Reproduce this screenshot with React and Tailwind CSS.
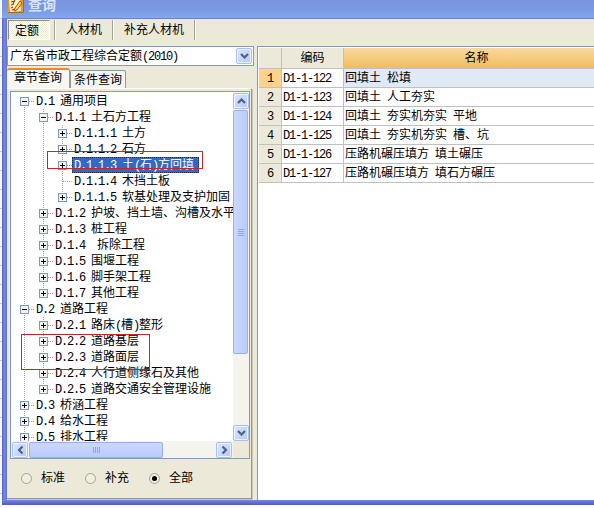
import React from 'react';

const tree = [
  { level: 0, label: 'D.1 通用项目', state: 'open', first: true },
  { level: 1, label: 'D.1.1 土石方工程', state: 'open' },
  { level: 2, label: 'D.1.1.1 土方', state: 'closed' },
  { level: 2, label: 'D.1.1.2 石方', state: 'closed' },
  { level: 2, label: 'D.1.1.3 土(石)方回填', state: 'closed', selected: true },
  { level: 2, label: 'D.1.1.4 木挡土板', state: 'leaf' },
  { level: 2, label: 'D.1.1.5 软基处理及支护加固', state: 'closed', last: true },
  { level: 1, label: 'D.1.2 护坡、挡土墙、沟槽及水平', state: 'closed' },
  { level: 1, label: 'D.1.3 桩工程', state: 'closed' },
  { level: 1, label: 'D.1.4  拆除工程', state: 'closed' },
  { level: 1, label: 'D.1.5 围堰工程', state: 'closed' },
  { level: 1, label: 'D.1.6 脚手架工程', state: 'closed' },
  { level: 1, label: 'D.1.7 其他工程', state: 'closed', last: true },
  { level: 0, label: 'D.2 道路工程', state: 'open' },
  { level: 1, label: 'D.2.1 路床(槽)整形', state: 'closed' },
  { level: 1, label: 'D.2.2 道路基层', state: 'closed' },
  { level: 1, label: 'D.2.3 道路面层', state: 'closed' },
  { level: 1, label: 'D.2.4 人行道侧缘石及其他', state: 'closed' },
  { level: 1, label: 'D.2.5 道路交通安全管理设施', state: 'closed', last: true },
  { level: 0, label: 'D.3 桥涵工程', state: 'closed' },
  { level: 0, label: 'D.4 给水工程', state: 'closed' },
  { level: 0, label: 'D.5 排水工程', state: 'closed' },
];

const rows = [
  ['D1-1-122', '回填土 松填'],
  ['D1-1-123', '回填土 人工夯实'],
  ['D1-1-124', '回填土 夯实机夯实 平地'],
  ['D1-1-125', '回填土 夯实机夯实 槽、坑'],
  ['D1-1-126', '压路机碾压填方 填土碾压'],
  ['D1-1-127', '压路机碾压填方 填石方碾压'],
];

// Latin runs are set half as wide as the Chinese characters
const Text = ({ children }) => (
  <span className="whitespace-pre">
    {children.split(/([ -~]+)/).filter(Boolean).map((part, i) =>
      /^[ -~]/.test(part) ? (
        <span key={i} className="font-['Liberation_Mono',monospace] tracking-[-1.2px]">{part}</span>
      ) : (
        <span key={i}>{part}</span>
      )
    )}
  </span>
);

const Chevron = ({ className = '' }) => (
  <svg viewBox="0 0 9 6" className={`h-[6px] w-[9px] shrink-0 ${className}`}>
    <path d="M1 1 L4.5 4.5 L8 1" fill="none" stroke="#4d6185" strokeWidth="2.2" />
  </svg>
);

const ScrollButton = ({ turn }) => (
  <div className="flex h-4 w-4 shrink-0 items-center justify-center rounded-[2px] border border-[#a9bff0] bg-gradient-to-br from-[#dce6ff] to-[#b5c8f8] shadow-[inset_0_0_0_1px_#edf2ff]">
    <Chevron className={turn} />
  </div>
);

const Toggle = ({ state }) => (
  <svg viewBox="0 0 9 9" className="h-[9px] w-[9px] shrink-0" shapeRendering="crispEdges">
    <rect x="0.5" y="0.5" width="8" height="8" fill="#f4f2ec" stroke="#7f98b4" />
    <path d="M2 4.5 H7" stroke="#000" />
    {state === 'closed' && <path d="M4.5 2 V7" stroke="#000" />}
  </svg>
);

// One 19px wide column with a dotted connector line
const Guide = () => (
  <svg viewBox="0 0 19 16" className="h-4 w-[19px] shrink-0" shapeRendering="crispEdges">
    <path d="M9.5 0 V16" stroke="#a0a0a0" strokeDasharray="1 1" />
  </svg>
);

const TreeRow = ({ node }) => (
  <div className="flex h-4 shrink-0 items-center pl-1">
    {node.level > 0 && <Guide />}
    {node.level > 1 && <Guide />}
    <div className="relative flex h-4 w-[19px] shrink-0 items-center pl-[5px]">
      <svg viewBox="0 0 19 16" className="absolute left-0 top-0 h-4 w-[19px]" shapeRendering="crispEdges">
        <path
          d={node.last ? 'M9.5 0 V8' : node.first ? 'M9.5 8 V16' : 'M9.5 0 V16'}
          stroke="#a0a0a0"
          strokeDasharray="1 1"
        />
        <path d="M10 8.5 H19" stroke="#a0a0a0" strokeDasharray="1 1" />
      </svg>
      {node.state !== 'leaf' && (
        <div className="relative pt-px">
          <Toggle state={node.state} />
        </div>
      )}
    </div>
    <div
      className={`flex h-4 items-center pl-[2px] ${
        node.selected ? 'bg-[#316ac5] pr-[5px] text-white outline-1 -outline-offset-1 outline-dotted outline-[#1b2b55]' : ''
      }`}
    >
      <Text>{node.label}</Text>
    </div>
  </div>
);

const Radio = ({ label, checked }) => (
  <div className="flex w-16 items-center">
    <div className="flex h-[11px] w-[11px] items-center justify-center rounded-full border border-[#a5a292] bg-[#f1efe4]">
      {checked && <div className="h-[5px] w-[5px] rounded-full bg-black" />}
    </div>
    <span className="ml-[9px]">{label}</span>
  </div>
);

const TitleBar = () => (
  <div className="flex h-[19px] shrink-0 items-start border-b border-[#6a86c8] bg-gradient-to-b from-[#7b94df] via-[#7a98e2] to-[#82a8ec] pl-[6px]">
    <svg viewBox="0 0 16 14" className="h-[14px] w-4">
      <path d="M0 0 H16 V13 H0 Z" fill="#e8971f" />
      <path d="M1 0 H12 L13 11 L2 12 Z" fill="#fff3cc" />
      <path d="M3 2 L7 1 M3 5 L6 4 M3 8 L5 7 M7 0 L5 4 M4 10 L7 9" stroke="#8a4510" strokeWidth="1.2" />
      <path d="M12 1 L7 8 L6 11 L9 10 L14 3 Z" fill="#ffd45a" stroke="#a65a0c" />
      <path d="M0 12.5 H15.5 V0" fill="none" stroke="#b8630e" />
    </svg>
    <span className="ml-1 -mt-[2px] text-[14px] font-bold leading-[14px] text-[#d9e4fb]">查询</span>
  </div>
);

const TopTabs = () => (
  <div className="flex h-[21px] shrink-0 items-start pl-px pt-px leading-5">
    <div className="h-5 w-[42px] border border-white border-l-[#8f8d80] border-t-[#8f8d80] bg-[repeating-conic-gradient(#ffffff_0_25%,#ece9d8_0_50%)] bg-[length:2px_2px] pl-[6px]">
      定额
    </div>
    <div className="ml-1 h-5 w-[58px] border-l border-[#a5a394] pl-[11px] shadow-[inset_1px_0_0_#fff]">人材机</div>
    <div className="h-5 w-[83px] border-l border-r border-[#a5a394] pl-[11px] shadow-[inset_1px_0_0_#fff,1px_0_0_#fff]">补充人材机</div>
  </div>
);

const TreePanel = () => (
  <div className="relative flex h-[368px] w-[240px] border border-[#7f9db9] bg-white">
    <div className="flex w-[222px] flex-col">
      <div className="h-[349px] overflow-hidden">
        <div className="flex flex-col pt-px">
          {tree.map((node) => (
            <TreeRow key={node.label} node={node} />
          ))}
        </div>
      </div>
      <div className="flex h-[17px] items-center bg-[#f4f3ee] px-px">
        <ScrollButton turn="rotate-90" />
        <div className="ml-px flex h-4 w-[134px] items-center justify-center gap-px rounded-[2px] border border-[#98b2e8] bg-gradient-to-b from-[#cbd9ff] to-[#b9cbf9]">
          {[0, 1, 2, 3].map((n) => (
            <i key={n} className="h-[6px] w-px bg-[#8fa9e0]" />
          ))}
        </div>
        <div className="ml-auto">
          <ScrollButton turn="-rotate-90" />
        </div>
      </div>
    </div>
    <div className="flex w-4 flex-col bg-[#f4f3ee]">
      <div className="flex h-[349px] flex-col pt-px">
        <ScrollButton turn="rotate-180" />
        <div className="mt-px flex h-[244px] w-[15px] flex-col items-center justify-center gap-px rounded-[2px] border border-[#98b2e8] bg-gradient-to-r from-[#cbd9ff] to-[#b9cbf9]">
          {[0, 1, 2, 3].map((n) => (
            <i key={n} className="h-px w-[6px] bg-[#8fa9e0]" />
          ))}
        </div>
        <div className="mt-auto">
          <ScrollButton turn="" />
        </div>
      </div>
      <div className="h-[17px] bg-[#ece9d8]" />
    </div>
    {/* red review marks drawn over the tree */}
    <div className="absolute left-[36px] top-[59px] h-[18px] w-[156px] border border-[#c4242c]" />
    <div className="absolute left-[10px] top-[242px] h-[36px] w-[129px] border border-[#c4242c]" />
  </div>
);

const LeftPane = () => (
  <div className="flex w-[250px] shrink-0 flex-col">
    <div className="mt-[6px] flex h-5 w-[247px] items-center justify-between border border-[#7f9db9] bg-white pl-[2px] pr-px">
      <Text>广东省市政工程综合定额(2010)</Text>
      <ScrollButton turn="" />
    </div>
    <div className="mt-[2px] flex h-5 items-end">
      <div className="h-5 w-[63px] rounded-t-[3px] border-r border-t-2 border-[#919b9c] border-t-[#e68b2c] bg-[#f7f6f0] pl-[7px] leading-[17px]">
        章节查询
      </div>
      <div className="h-[18px] w-[56px] rounded-t-[2px] border border-b-0 border-[#919b9c] bg-[#f5f4ee] pl-[3px] leading-[18px]">
        条件查询
      </div>
    </div>
    <div className="h-[411px] w-[245px] border-b border-r border-t border-[#919b9c] border-t-white pl-[3px] pt-[2px] shadow-[1px_1px_0_#c9c6b6]">
      <TreePanel />
      <div className="flex h-[38px] items-center pl-[11px]">
        <Radio label="标准" />
        <Radio label="补充" />
        <Radio label="全部" checked />
      </div>
    </div>
  </div>
);

const ResultTable = () => (
  <div className="mt-[6px] flex-1 overflow-hidden border-l border-t border-[#7f9db9] bg-white pl-px pt-px">
    <div className="grid grid-cols-[23px_62px_1fr] leading-[19px]">
      <div className="h-[21px] border-b border-r border-[#c0c0c0] bg-[#ece9d8]" />
      <div className="h-[21px] border-b border-r border-[#c0c0c0] bg-[#ece9d8] text-center leading-5">编码</div>
      <div className="h-[21px] border-b border-[#c0c0c0] bg-gradient-to-b from-[#f9d99f] to-[#f0bd5a] pl-[15px] text-center leading-5">
        名称
      </div>
      {rows.map(([code, name], i) => (
        <React.Fragment key={code}>
          <div className={`h-[19px] border-b border-r border-[#c0c0c0] text-center ${i === 0 ? 'bg-[#ffd28c]' : 'bg-[#ece9d8]'}`}>
            <Text>{String(i + 1)}</Text>
          </div>
          <div className="h-[19px] border-b border-r border-[#c0c0c0] pl-px">
            <Text>{code}</Text>
          </div>
          <div className={`h-[19px] border-b border-[#c0c0c0] pl-px ${i === 0 ? 'bg-[#e0e9f6]' : ''}`}>
            <Text>{name}</Text>
          </div>
        </React.Fragment>
      ))}
    </div>
  </div>
);

const App = () => (
  <div className="flex h-[508px] w-[594px] overflow-hidden bg-[#fcfcfe] font-['Liberation_Sans','Noto_Sans_CJK_SC',sans-serif] text-[12px] leading-[16px] text-black">
    <div className="h-full w-[2px] shrink-0 bg-[repeating-linear-gradient(to_bottom,#f7f7fb_0,#f7f7fb_18px,#c8cbd8_18px,#c8cbd8_19px)]" />
    <div className="flex h-[505px] flex-1 flex-col">
      <div className="flex min-h-0 flex-1">
        <div className="w-[5px] shrink-0 bg-gradient-to-r from-[#5566c4] via-[#7587e0] to-[#6073cf]" />
        <div className="flex min-w-0 flex-1 flex-col bg-[#ece9d8]">
          <div className="-ml-[5px] flex flex-col">
            <TitleBar />
          </div>
          <TopTabs />
          <div className="flex min-h-0 flex-1">
            <LeftPane />
            <ResultTable />
          </div>
        </div>
      </div>
      <div className="h-[5px] shrink-0 bg-gradient-to-b from-[#7587e0] to-[#4c5cb8]" />
    </div>
  </div>
);

export default App;
